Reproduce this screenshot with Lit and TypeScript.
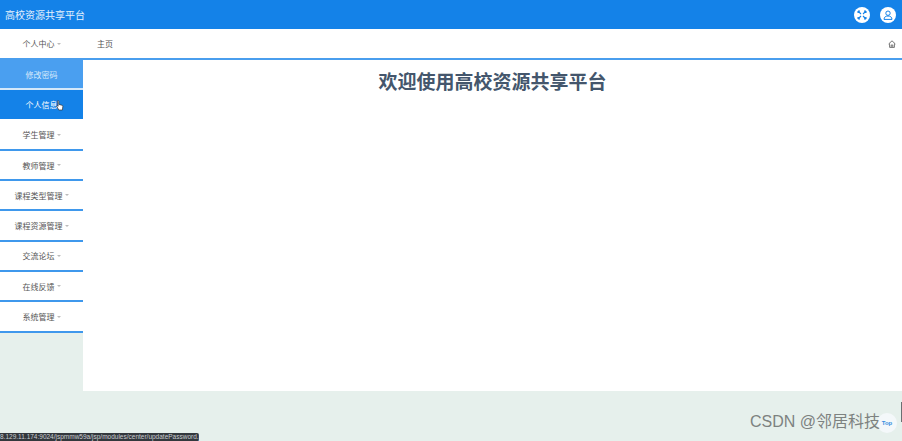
import { LitElement, html, css, svg } from "lit";
import { customElement } from "lit/decorators.js";

const CJK = `"Noto Sans CJK SC", "Liberation Sans", sans-serif`;

const items = [
  { label: "学生管理" },
  { label: "教师管理" },
  { label: "课程类型管理" },
  { label: "课程资源管理" },
  { label: "交流论坛" },
  { label: "在线反馈" },
  { label: "系统管理" },
];

@customElement("app-root")
export class AppRoot extends LitElement {
  static styles = css`
    :host {
      display: block;
      position: relative;
      width: 902px;
      height: 441px;
      overflow: hidden;
      background: #e6f0ec;
      font-family: ${css([CJK] as unknown as TemplateStringsArray)};
    }
    .header {
      height: 29px;
      background: #1482e8;
      display: flex;
      align-items: center;
      justify-content: space-between;
      padding: 0 6px 0 5px;
      box-sizing: border-box;
    }
    .title {
      color: #e4f1fd;
      font-size: 10px;
      letter-spacing: 0;
    }
    .header-icons {
      display: flex;
      gap: 10px;
    }
    .round {
      width: 16px;
      height: 16px;
      border-radius: 50%;
      background: #fff;
      display: flex;
      align-items: center;
      justify-content: center;
    }
    .body {
      display: grid;
      grid-template-columns: 83px 1fr;
      grid-template-rows: 31px 331px;
    }
    .top-left {
      background: #fff;
      border-bottom: 2px solid #4a9eee;
      box-sizing: border-box;
    }
    .crumb {
      background: #fff;
      border-bottom: 2px solid #4a9eee;
      box-sizing: border-box;
      display: flex;
      align-items: center;
      justify-content: space-between;
      padding: 0 6px 0 14px;
      font-size: 8px;
      color: #555;
    }
    .side {
      display: flex;
      flex-direction: column;
      align-items: stretch;
    }
    .item {
      height: 30.3px;
      box-sizing: border-box;
      background: #fff;
      border-bottom: 2px solid #3f98ec;
      display: flex;
      align-items: center;
      justify-content: center;
      gap: 2px;
      font-size: 8px;
      color: #555;
    }
    .top-left.item {
      height: 31px;
      border-bottom-color: #4a9eee;
    }
    .item.sub {
      background: #4a9ff0;
      color: #d8eafb;
      border-bottom-color: #d4e8fa;
    }
    .item.active {
      background: #1482e8;
      color: #fff;
      border-bottom-color: #fff;
    }
    .caret {
      width: 0;
      height: 0;
      border-left: 2px solid transparent;
      border-right: 2px solid transparent;
      border-top: 2px solid #bbb;
    }
    .main {
      background: #fff;
      text-align: center;
    }
    h1 {
      margin: 7px 0 0;
      font-size: 19px;
      line-height: 28px;
      font-weight: 700;
      color: #44566c;
    }
    .cursor {
      position: absolute;
      left: 56px;
      top: 100px;
    }
    .status {
      position: absolute;
      left: 0;
      bottom: 0;
      width: 199px;
      height: 8px;
      background: #33383d;
      color: #c9ccd0;
      font: 6.5px/8px "Liberation Sans", sans-serif;
      white-space: nowrap;
      overflow: hidden;
      border-top-right-radius: 2px;
    }
    .watermark {
      position: absolute;
      left: 750px;
      top: 411px;
      font-size: 16px;
      line-height: 22px;
      color: #7d8280;
      white-space: nowrap;
      font-family: "Liberation Sans", "Noto Sans CJK SC", sans-serif;
    }
    .top-btn {
      position: absolute;
      left: 877px;
      top: 413px;
      width: 20px;
      height: 20px;
      border-radius: 50%;
      background: #f4f8fa;
      color: #3a8fe0;
      font: 700 6px/20px "Liberation Sans", sans-serif;
      text-align: center;
    }
    .edge {
      position: absolute;
      left: 901px;
      top: 402px;
      width: 1px;
      height: 20px;
      background: #6b6f72;
    }
  `;

  render() {
    return html`
      <div class="header">
        <span class="title">高校资源共享平台</span>
        <div class="header-icons">
          <span class="round">
            <svg width="10" height="10" viewBox="0 0 10 10" fill="none" stroke="#1482e8" stroke-width="1.1">
              ${svg`<path d="M1 1l3 3M9 1L6 4M1 9l3-3M9 9L6 6M1 1h2M1 1v2M9 1H7M9 1v2M1 9h2M1 9V7M9 9H7M9 9V7"/>`}
            </svg>
          </span>
          <span class="round">
            <svg width="10" height="10" viewBox="0 0 10 10" fill="none" stroke="#1482e8" stroke-width="1">
              ${svg`<circle cx="5" cy="3.2" r="2.2"/><path d="M1 9.4c0-2.4 1.8-3.4 4-3.4s4 1 4 3.4z"/>`}
            </svg>
          </span>
        </div>
      </div>
      <div class="body">
        <div class="top-left item">个人中心<span class="caret"></span></div>
        <div class="crumb">
          <span>主页</span>
          <svg width="8" height="8" viewBox="0 0 8 8" fill="none" stroke="#777" stroke-width="1">
            ${svg`<path d="M.6 4L4 .8 7.4 4M1.6 3.4V7.4h4.8V3.4M3.2 7.4V5h1.6v2.4"/>`}
          </svg>
        </div>
        <div class="side">
          <div class="item sub">修改密码</div>
          <div class="item active">个人信息</div>
          ${items.map(
            (i) => html`<div class="item">${i.label}<span class="caret"></span></div>`
          )}
        </div>
        <div class="main">
          <h1>欢迎使用高校资源共享平台</h1>
        </div>
      </div>
      <svg class="cursor" width="8" height="11" viewBox="0 0 8 11">
        ${svg`<path d="M1.6 .8c.6-.4 1.2 0 1.2.6V4.4l3 .8c.8.2 1.2.6 1 1.4L6.4 10H2.8L.8 6.4c-.3-.6.3-1 .9-.6l.5.4L1.6 1.4z" fill="#fff" stroke="#333" stroke-width=".7"/>`}
      </svg>
      <div class="status">8.129.11.174:9024/jspmmw59a/jsp/modules/center/updatePassword.jsp</div>
      <div class="edge"></div>
      <div class="top-btn">Top</div>
      <div class="watermark">CSDN @邻居科技</div>
    `;
  }
}
